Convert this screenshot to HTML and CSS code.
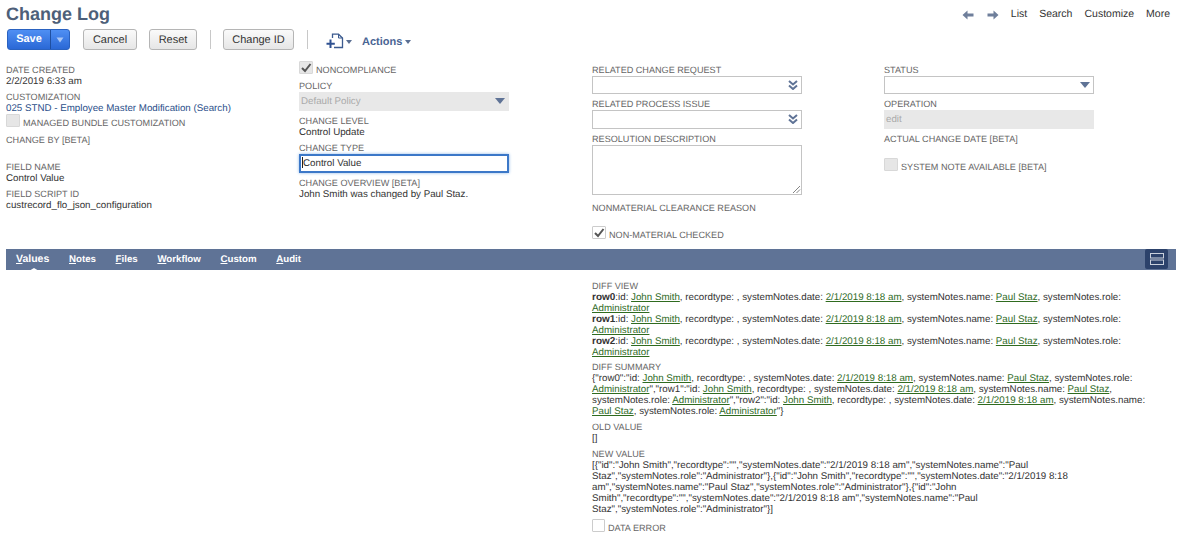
FILE: index.html
```html
<!DOCTYPE html>
<html lang="en">
<head>
<meta charset="utf-8">
<title>Change Log</title>
<link rel="stylesheet" href="styles.css">
</head>
<body>
<header class="top">
  <h1 class="title">Change Log</h1>
  <nav class="topnav">
    <svg class="arrow" viewBox="0 0 12 10" width="12" height="10"><path d="M5.5 0.5 L0.5 5 L5.5 9.5 V6.6 H11.5 V3.4 H5.5 Z"/></svg>
    <svg class="arrow arrow-next" viewBox="0 0 12 10" width="12" height="10"><path d="M6.5 0.5 L11.5 5 L6.5 9.5 V6.6 H0.5 V3.4 H6.5 Z"/></svg>
    <a class="navlink nav-list">List</a>
    <a class="navlink">Search</a>
    <a class="navlink">Customize</a>
    <a class="navlink">More</a>
  </nav>
</header>
<div class="toolbar">
  <div class="save"><span class="save-main">Save</span><span class="save-drop"><svg viewBox="0 0 8 6" width="8" height="6"><path d="M0.5 0.5 H7.5 L4 5.5 Z"/></svg></span></div>
  <button class="btn btn-cancel">Cancel</button>
  <button class="btn btn-reset">Reset</button>
  <span class="sep"></span>
  <button class="btn">Change ID</button>
  <span class="sep sep-b"></span>
  <svg class="newdoc" viewBox="0 0 18 16" width="18" height="16"><path d="M6.5 5 V1.2 H12.5 L16.5 5 V14.5 H8" fill="none" stroke="#3b5a8f" stroke-width="1.3"/><path d="M12.5 1.2 V5 H16.5" fill="none" stroke="#3b5a8f" stroke-width="1"/><path d="M4.5 6.5 V15 M0.5 10.8 H8.8" fill="none" stroke="#2f5191" stroke-width="2"/></svg>
  <span class="caret caret-doc"></span>
  <span class="actions">Actions</span><span class="caret"></span>
</div>

<section class="form">
  <div class="col">
    <div class="field"><div class="lbl">DATE CREATED</div><div class="val">2/2/2019 6:33 am</div></div>
    <div class="field field-tight"><div class="lbl">CUSTOMIZATION</div><div class="val"><a class="bluelink">025 STND - Employee Master Modification (Search)</a></div></div>
    <div class="check check-first"><span class="box box-off"></span><span class="lbl">MANAGED BUNDLE CUSTOMIZATION</span></div>
    <div class="field field-empty"><div class="lbl">CHANGE BY [BETA]</div></div>
    <div class="field"><div class="lbl">FIELD NAME</div><div class="val">Control Value</div></div>
    <div class="field"><div class="lbl">FIELD SCRIPT ID</div><div class="val">custrecord_flo_json_configuration</div></div>
  </div>
  <div class="col col-two">
    <div class="check check-top"><span class="box box-off"><svg viewBox="0 0 14 14" width="14" height="14"><path d="M3 7 L6 10 L11.5 3" class="tick"/></svg></span><span class="lbl">NONCOMPLIANCE</span></div>
    <div class="field"><div class="lbl">POLICY</div><div class="ctl ctl-off ctl-tall">Default Policy<svg class="tri" viewBox="0 0 10 6" width="10" height="6"><path d="M0 0 H10 L5 6 Z"/></svg></div></div>
    <div class="field"><div class="lbl">CHANGE LEVEL</div><div class="val">Control Update</div></div>
    <div class="field"><div class="lbl">CHANGE TYPE</div><div class="ctl ctl-focus"><span class="cursor"></span>Control Value</div></div>
    <div class="field"><div class="lbl">CHANGE OVERVIEW [BETA]</div><div class="val">John Smith was changed by Paul Staz.</div></div>
  </div>
  <div class="col">
    <div class="field"><div class="lbl">RELATED CHANGE REQUEST</div><div class="ctl"><svg class="dbl" viewBox="0 0 10 10" width="10" height="10"><path d="M1 1 L5 4.5 L9 1 M1 5.5 L5 9 L9 5.5"/></svg></div></div>
    <div class="field"><div class="lbl">RELATED PROCESS ISSUE</div><div class="ctl ctl-tall"><svg class="dbl" viewBox="0 0 10 10" width="10" height="10"><path d="M1 1 L5 4.5 L9 1 M1 5.5 L5 9 L9 5.5"/></svg></div></div>
    <div class="field"><div class="lbl">RESOLUTION DESCRIPTION</div><div class="textarea"><svg class="grip" viewBox="0 0 9 9" width="9" height="9"><path d="M1 8 L8 1 M4.5 8 L8 4.5"/></svg></div></div>
    <div class="field field-reason"><div class="lbl">NONMATERIAL CLEARANCE REASON</div></div>
    <div class="check"><span class="box"><svg viewBox="0 0 14 14" width="14" height="14"><path d="M3 7 L6 10 L11.5 3" class="tick"/></svg></span><span class="lbl">NON-MATERIAL CHECKED</span></div>
  </div>
  <div class="col">
    <div class="field"><div class="lbl">STATUS</div><div class="ctl"><svg class="tri" viewBox="0 0 10 6" width="10" height="6"><path d="M0 0 H10 L5 6 Z"/></svg></div></div>
    <div class="field"><div class="lbl">OPERATION</div><div class="ctl ctl-off ctl-tall">edit</div></div>
    <div class="field field-actual"><div class="lbl">ACTUAL CHANGE DATE [BETA]</div></div>
    <div class="check"><span class="box box-off"></span><span class="lbl">SYSTEM NOTE AVAILABLE [BETA]</span></div>
  </div>
</section>

<div class="tabs">
  <a class="tab tab-on"><u>V</u>alues</a>
  <a class="tab"><u>N</u>otes</a>
  <a class="tab"><u>F</u>iles</a>
  <a class="tab"><u>W</u>orkflow</a>
  <a class="tab"><u>C</u>ustom</a>
  <a class="tab"><u>A</u>udit</a>
  <span class="layout"><svg viewBox="0 0 16 14" width="16" height="14"><rect x="1.5" y="1.5" width="13" height="4.5"/><rect x="1.5" y="8" width="13" height="4.5"/></svg></span>
</div>

<section class="lower">
  <div class="lower-col">
    <div class="field"><div class="lbl">DIFF VIEW</div>
      <div class="val wide"><b class="rowkey">row0</b>:id: <a class="glink">John Smith</a>, recordtype: , systemNotes.date: <a class="glink">2/1/2019 8:18 am</a>, systemNotes.name: <a class="glink">Paul Staz</a>, systemNotes.role: <a class="glink">Administrator</a><br>
      <b class="rowkey">row1</b>:id: <a class="glink">John Smith</a>, recordtype: , systemNotes.date: <a class="glink">2/1/2019 8:18 am</a>, systemNotes.name: <a class="glink">Paul Staz</a>, systemNotes.role: <a class="glink">Administrator</a><br>
      <b class="rowkey">row2</b>:id: <a class="glink">John Smith</a>, recordtype: , systemNotes.date: <a class="glink">2/1/2019 8:18 am</a>, systemNotes.name: <a class="glink">Paul Staz</a>, systemNotes.role: <a class="glink">Administrator</a></div></div>
    <div class="field field-gap"><div class="lbl">DIFF SUMMARY</div>
      <div class="val wide">{"row0":"id: <a class="glink">John Smith</a>, recordtype: , systemNotes.date: <a class="glink">2/1/2019 8:18 am</a>, systemNotes.name: <a class="glink">Paul Staz</a>, systemNotes.role: <a class="glink">Administrator</a>","row1":"id: <a class="glink">John Smith</a>, recordtype: , systemNotes.date: <a class="glink">2/1/2019 8:18 am</a>, systemNotes.name: <a class="glink">Paul Staz</a>, systemNotes.role: <a class="glink">Administrator</a>","row2":"id: <a class="glink">John Smith</a>, recordtype: , systemNotes.date: <a class="glink">2/1/2019 8:18 am</a>, systemNotes.name: <a class="glink">Paul Staz</a>, systemNotes.role: <a class="glink">Administrator</a>"}</div></div>
    <div class="field field-gap"><div class="lbl">OLD VALUE</div><div class="val">[]</div></div>
    <div class="field"><div class="lbl">NEW VALUE</div>
      <div class="val narrow">[{"id":"John Smith","recordtype":"","systemNotes.date":"2/1/2019 8:18 am","systemNotes.name":"Paul Staz","systemNotes.role":"Administrator"},{"id":"John Smith","recordtype":"","systemNotes.date":"2/1/2019 8:18 am","systemNotes.name":"Paul Staz","systemNotes.role":"Administrator"},{"id":"John Smith","recordtype":"","systemNotes.date":"2/1/2019 8:18 am","systemNotes.name":"Paul Staz","systemNotes.role":"Administrator"}]</div></div>
    <div class="check"><span class="box box-small"></span><span class="lbl">DATA ERROR</span></div>
  </div>
</section>
</body>
</html>
```

FILE: styles.css
```css
* { box-sizing: border-box; }
html, body { margin: 0; padding: 0; }
body {
  width: 1187px;
  height: 551px;
  overflow: hidden;
  background: #fff;
  padding: 0 11px 0 6px;
  font-family: "Liberation Sans", Arial, sans-serif;
  font-size: 9.75px;
  line-height: 11px;
  color: #333;
  text-rendering: geometricPrecision;
}

/* header */
.top { display: flex; justify-content: space-between; align-items: center; height: 29px; }
.title { margin: 0; font-size: 18px; line-height: 22px; font-weight: bold; color: #4d5f79; position: relative; top: -1px; }
.topnav { display: flex; align-items: center; padding-right: 6px; }
.navlink { font-size: 10.5px; color: #333; margin-left: 12px; }
.nav-list { margin-left: 12px; }
.arrow { fill: #6f7f9b; margin-left: 13px; }
.arrow-next { margin-left: 13px; }

/* toolbar */
.toolbar { display: flex; align-items: center; height: 21px; padding-left: 1px; }
.save { display: flex; width: 63px; height: 21px; border-radius: 3px; overflow: hidden; border: 1px solid #2a62c0; background: linear-gradient(#4f8ff3, #2a68d6); }
.save-main { width: 43px; text-align: center; color: #fff; font-weight: bold; font-size: 11px; line-height: 19px; border-right: 1px solid #1f4f9f; }
.save-drop { flex: 1; display: flex; align-items: center; justify-content: center; }
.save-drop svg { fill: #a9c6f5; }
.btn { height: 21px; padding: 0; width: 71px; margin-left: 13px; border: 1px solid #b5b5b5; border-radius: 3px; background: linear-gradient(#fafafa, #e6e6e6); font-family: inherit; font-size: 11px; color: #333; text-rendering: geometricPrecision; }
.btn-cancel { width: 54px; }
.btn-reset { width: 48px; margin-left: 12px; }
.sep { width: 1px; height: 19px; background: #c8c8c8; margin-left: 13px; }
.sep + .btn { margin-left: 12px; }
.sep-b { margin-left: 13px; }
.newdoc { margin-left: 18px; margin-top: 3px; }
.caret { width: 0; height: 0; border-left: 3px solid transparent; border-right: 3px solid transparent; border-top: 4px solid #5a6f93; margin-left: 3px; margin-top: 4px; }
.caret-doc { margin-left: 2px; }
.actions { margin-left: 10px; font-size: 11px; font-weight: bold; color: #4a6594; margin-top: 6px; }

/* form grid */
.form { display: grid; grid-template-columns: 293px 293px 292px 292px; margin-top: 15px; height: 184px; }
.col-two { margin-top: -5px; }
.field { margin-bottom: 5px; }
.field-tight { margin-bottom: 0; }
.field-empty { margin-bottom: 16px; }
.field-actual { margin-bottom: 13px; }
.field-reason { margin-top: 8px; margin-bottom: 12px; }
.lbl { color: #666; font-size: 9.1px; line-height: 11px; }
.val { color: #333; }
.bluelink { color: #2b4f8a; }

.ctl { position: relative; width: 210px; height: 18px; border: 1px solid #c4c4c4; background: #fff; line-height: 17px; padding-left: 2px; }
.ctl-tall { height: 19px; }
.ctl-off { background: #e8e8e8; border-color: #e8e8e8; color: #aaa; line-height: 18px; padding-left: 1px; }
.ctl-focus { height: 19px; border: 2px solid #3c78c8; box-shadow: 0 0 3px #8fb7e8; line-height: 15px; padding-left: 1px; }
.cursor { display: inline-block; width: 1px; height: 11px; background: #222; vertical-align: -2px; }
.tri { position: absolute; right: 3px; top: 5px; fill: #5f7396; }
.dbl { position: absolute; right: 3px; top: 3px; fill: none; stroke: #5f7396; stroke-width: 2; }
.textarea { position: relative; width: 210px; height: 50px; border: 1px solid #c4c4c4; background: #fff; }
.grip { position: absolute; right: 0; bottom: 0; fill: none; stroke: #666; stroke-width: 0.8; }

.check { display: flex; align-items: flex-end; gap: 3px; margin-bottom: 5px; }
.check .lbl { position: relative; top: 2px; }
.check-first { margin-bottom: 8px; }
.check-top { margin-bottom: 7px; margin-top: 1px; }
.box { width: 14px; height: 13px; flex: none; border: 1px solid #ccc; border-radius: 1px; background: #fff; display: block; overflow: hidden; }
.box svg { display: block; margin: -1px 0 0 -1px; }
.box-off { background: #e6e6e6; border-color: #d8d8d8; }
.box-small { width: 13px; }
.tick { fill: none; stroke: #555; stroke-width: 2; }

/* tabs */
.tabs { position: relative; display: flex; align-items: center; height: 21px; background: #5f7396; padding-left: 10px; }
.tab { color: #fff; font-size: 9.7px; font-weight: bold; margin-right: 19.7px; }
.tab-on { position: relative; font-size: 10.5px; }
.tab-on::after { content: ""; position: absolute; left: 13px; bottom: -6px; border-left: 5px solid transparent; border-right: 5px solid transparent; border-bottom: 3px solid #fff; }
.layout { position: absolute; right: 8px; top: 0; width: 23px; height: 20px; background: #2c426b; border-radius: 2px; display: flex; align-items: center; justify-content: center; }
.layout rect { fill: none; stroke: #c9d0dc; stroke-width: 1; }

/* lower */
.lower { display: grid; grid-template-columns: 293px 293px 584px; padding-top: 11px; }
.lower-col { grid-column: 3; }
.rowkey { font-size: 10px; }
.wide { width: 560px; }
.narrow { width: 482px; }
.glink { color: #2f6b1f; text-decoration: underline; }
.lower .field { margin-bottom: 4px; }
.lower .field-gap { margin-bottom: 5px; }
.lower .check { margin-top: 2px; }
```
